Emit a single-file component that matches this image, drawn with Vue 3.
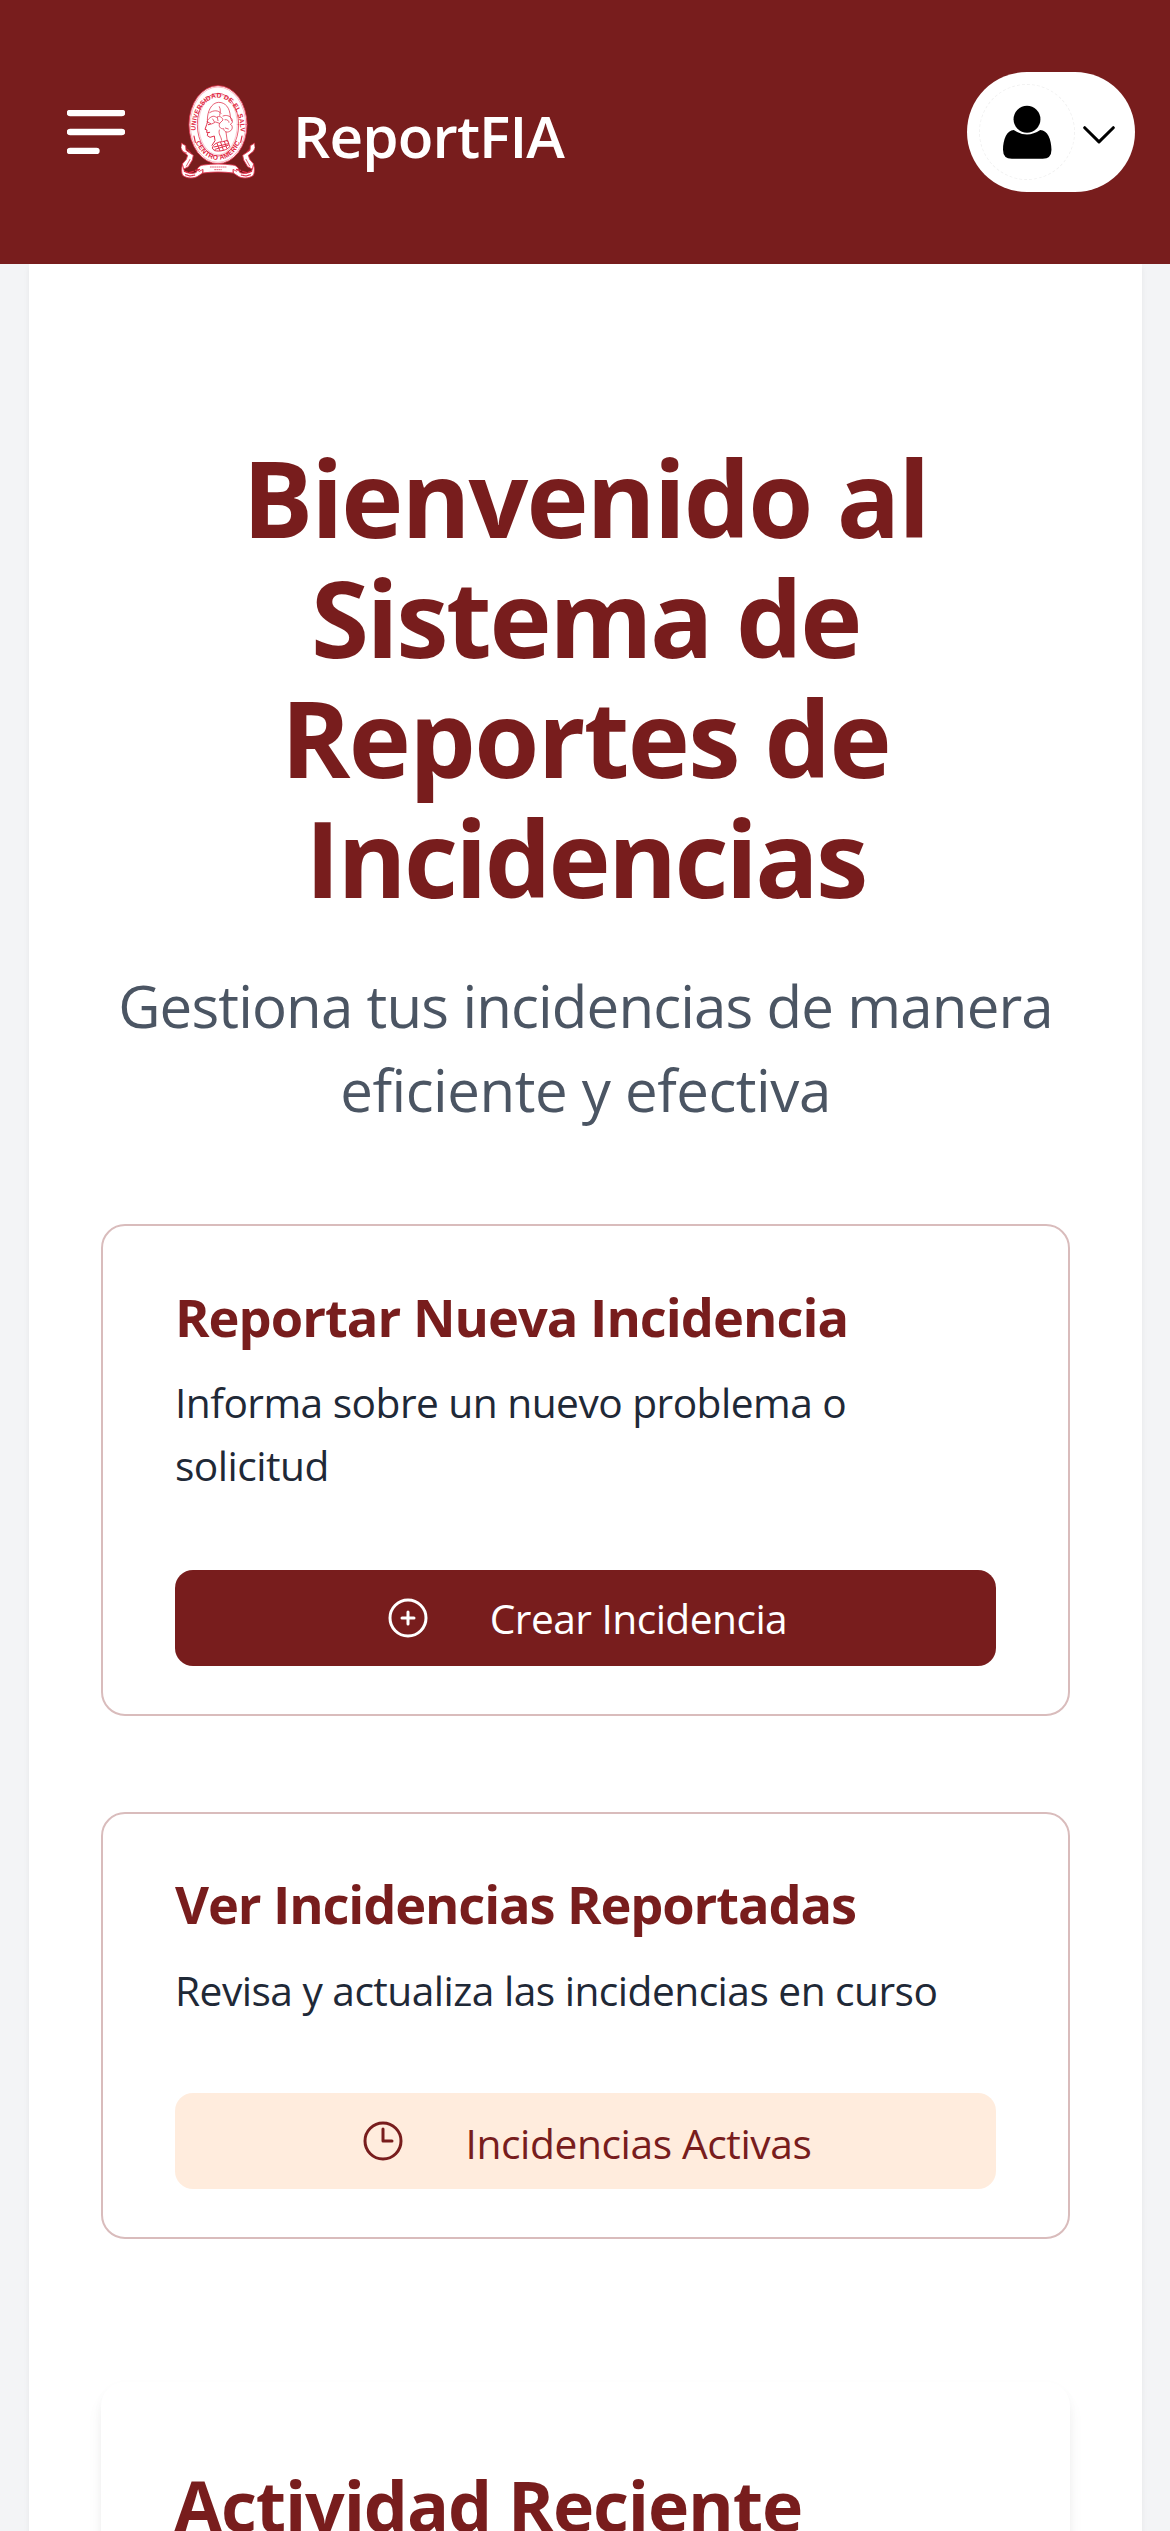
<script setup>
const titleLines = [
  { text: 'Bienvenido al', tone: 'l1' },
  { text: 'Sistema de', tone: 'l2' },
  { text: 'Reportes de', tone: 'l3' },
  { text: 'Incidencias', tone: 'l4' },
]
</script>

<template>
  <div class="screen">
    <header class="topbar">
      <div class="brand">
        <svg class="menu" viewBox="0 0 58 44" width="58" height="44" aria-label="Menú">
          <path d="M3 3H55M3 22H55M3 41H29.500" fill="none" stroke="#fff" stroke-width="6.400" stroke-linecap="round" />
        </svg>
        <svg class="crest" viewBox="10 15 222 282" width="74" height="94">
          <defs>
            <path id="arc-top" d="M53.500 152 A67.500 99 0 1 1 188.500 152" />
            <path id="arc-bottom" d="M52 182 A79 112 0 0 0 190 182" />
          </defs>
          <g stroke="#e33650" stroke-width="2.600" fill="#fff" stroke-linejoin="round" stroke-linecap="round">
            <path d="M12 190l12 7 1 14 22 15-3 14-12 20-15 8-3-16 12-14 4-12-15-12-5-10z" />
            <path d="M230 190l-12 7-1 14-22 15 3 14 12 20 15 8 3-16-12-14-4-12 15-12 5-10z" />
            <path d="M14 254c-3 12-3 24 1 32 12 10 34 10 45 3l15-10 2-16-15 2-6 12c-10 6-28 4-36-4z" />
            <path d="M228 254c3 12 3 24-1 32-12 10-34 10-45 3l-15-10-2-16 15 2 6 12c10 6 28 4 36-4z" />
            <path d="M60 265c4-6 10-10 18-10 28-4 58-4 86 0 8 0 14 4 18 10l-5 9-11-6v11c-28-4-62-4-90 0v-11l-11 6z" />
            <ellipse cx="121" cy="134" rx="87" ry="117" />
            <ellipse cx="121" cy="134" rx="83" ry="113" stroke-width="1" />
            <ellipse cx="121" cy="134" rx="62" ry="94" stroke-width="2.400" />
            <ellipse cx="121" cy="134" rx="58" ry="90" stroke-width=".8" />
          </g>
          <g class="motto" fill="#df2440">
            <text><textPath href="#arc-top" textLength="326" lengthAdjust="spacing">UNIVERSIDAD DE EL SALVADOR</textPath></text>
            <text><textPath href="#arc-bottom" startOffset="5" textLength="195" lengthAdjust="spacing">CENTRO AMERICA</textPath></text>
          </g>
          <g fill="none" stroke="#e0304a" stroke-width="2.300" stroke-linecap="round" stroke-linejoin="round">
            <path d="M49 168l4 19M193 168l-4 19" stroke-width="3.600" />
            <path d="M89 120c0-26 12-52 34-53 20 0 34 16 35 44l4 12M96 98c12-8 26-8 34 2M125 80c5 9 3 16 1 26" />
            <path d="M90 124l-3 10-5 14 6 2-1 7 3 3-1 7 8 5 13-4 2 14-9 14M92 134l7-2M89 158l7-1" stroke-width="3" />
            <path d="M91 119c8-9 16-14 25-7 10-6 18 0 20 8l-10 10-12-4-12 6-13-6zM105 117l5 8M119 112l2 10" />
            <path d="M136 108c10-4 20-1 26 8 5 8 2 14-4 17 9 4 7 17-2 21-9 5-17 1-18-8-10 2-17-8-12-16M142 119c7-1 12 3 12 8M143 144l9 3M125 150c-4 12 5 18 7 31M145 156l4 29" />
            <path d="M104 203c3-11 17-18 31-18l15-4 6 19c-7 10-29 16-45 12zM109 201l44-10M112 208l39-12M118 190l8 21M129 187l8 23M140 184l7 20" stroke-width="3" />
            <path d="M18 216l9 3M29 207l10 11M26 258l11-20M216 207l-10 11M216 258l-11-20" />
            <path d="M98 261h47M111 269h20" stroke-dasharray="3 3.500" />
            <path d="M20 274l10 3m5 1 12-4m6-3 14-3M24 284l13 4 15-3M222 274l-10 3m-5 1-12-4m-6-3-14-3M218 284l-13 4-15-3" stroke-dasharray="3 2" stroke-width="3.500" />
          </g>
        </svg>
        <span class="name">ReportFIA</span>
      </div>
      <div class="account">
        <span class="avatar">
          <svg viewBox="0 0 96 96" width="94" height="94">
            <circle cx="48" cy="35" r="13.700" />
            <path d="M34.500 46Q48 55 61.500 46C69 46 73 56 73 66Q73 75.200 64 75.200H32.500Q23.500 75.200 23.500 66C23.500 56 27.500 46 34.500 46Z" />
          </svg>
        </span>
        <svg class="chevron" viewBox="0 0 32 18" width="32" height="18">
          <path d="M1.700 1.700L16 15.900L30.300 1.700" fill="none" stroke="#000" stroke-width="3" stroke-linecap="round" stroke-linejoin="round" />
        </svg>
      </div>
    </header>

    <main class="panel">
      <h1><span v-for="line in titleLines" :key="line.text" :class="line.tone">{{ line.text }}</span></h1>
      <p class="lead"><span>Gestiona tus incidencias de manera</span><span class="second">eficiente y efectiva</span></p>

      <section class="card">
        <h2>Reportar Nueva Incidencia</h2>
        <p>Informa sobre un nuevo problema o<br>solicitud</p>
        <button class="primary">
          <svg viewBox="0 0 24 24" width="48" height="48"><path d="M12 9v6m3-3H9m12 0a9 9 0 1 1-18 0 9 9 0 0 1 18 0Z" /></svg>
          <span>Crear Incidencia</span>
        </button>
      </section>

      <section class="card reported">
        <h2>Ver Incidencias Reportadas</h2>
        <p>Revisa y actualiza las incidencias en curso</p>
        <button class="soft">
          <svg viewBox="0 0 24 24" width="48" height="48"><path d="M12 6v6h4.500m4.500 0a9 9 0 1 1-18 0 9 9 0 0 1 18 0Z" /></svg>
          <span>Incidencias Activas</span>
        </button>
      </section>

      <section class="activity">
        <h2>Actividad Reciente</h2>
      </section>
    </main>
  </div>
</template>

<style>
body { margin: 0; background: #f3f4f6; }
</style>

<style scoped>
* { box-sizing: border-box; }
.screen {
  width: 1170px;
  height: 2531px;
  overflow: hidden;
  background: #f3f4f6;
  font-family: "Open Sans", "Noto Sans", sans-serif;
}
h1, h2, p { margin: 0; white-space: nowrap; }
.topbar {
  display: flex;
  align-items: center;
  justify-content: space-between;
  height: 264px;
  padding: 0 35px 0 67px;
  background: #781d1d;
}
.brand { display: flex; align-items: center; }
.crest { margin-left: 56px; }
.motto { font: 700 20px "Liberation Sans", sans-serif; }
.name {
  margin: 7px 0 0 38px;
  color: #fff;
  font-size: 58.4px;
  font-weight: 620;
  line-height: 84px;
  letter-spacing: -0.85px;
}
.account {
  display: flex;
  align-items: center;
  width: 168px;
  height: 120px;
  padding-left: 12px;
  border-radius: 60px;
  background: #fff;
}
.avatar {
  display: flex;
  width: 96px;
  height: 96px;
  border: 1px dashed #f1f1f1;
  border-radius: 50%;
}
.chevron { margin: 5px 0 0 8px; }
.panel {
  width: 1113px;
  height: 2600px;
  margin-left: 29px;
  padding: 174px 72px 0;
  background: #fff;
  box-shadow: 0 3px 6px rgba(0, 0, 0, 0.06);
}
h1 {
  color: #781d1d;
  font-size: 105.2px;
  font-weight: 700;
  line-height: 120px;
  text-align: center;
}
h1 span, .lead span { display: block; }
.l1 { letter-spacing: -2px; }
.l2 { letter-spacing: -2.4px; }
.l3 { letter-spacing: -1.65px; }
.l4 { letter-spacing: -2.7px; }
.lead {
  margin-top: 46px;
  color: #4b5563;
  font-size: 58.2px;
  line-height: 84px;
  letter-spacing: -0.87px;
  text-align: center;
}
.lead .second { letter-spacing: -0.49px; }
.card {
  height: 492px;
  margin-top: 92px;
  padding: 49px 72px 0 72px;
  border: 2px solid #d9bcbc;
  border-radius: 24px;
}
.card h2 {
  color: #781d1d;
  font-size: 52.4px;
  line-height: 84px;
  letter-spacing: -0.98px;
}
.card p {
  margin-top: 12px;
  color: #1f2937;
  font-size: 40.7px;
  line-height: 63px;
  letter-spacing: -0.53px;
}
button {
  display: flex;
  align-items: center;
  justify-content: center;
  gap: 58px;
  width: 821px;
  height: 96px;
  margin-top: 73px;
  padding: 0;
  border: 0;
  border-radius: 18px;
  font: 400 40.7px/63px "Open Sans", "Noto Sans", sans-serif;
  letter-spacing: -0.54px;
}
button svg { fill: none; stroke: currentColor; stroke-width: 1.5; stroke-linecap: round; stroke-linejoin: round; }
.primary { background: #781d1d; color: #fff; }
.soft { background: #ffecdd; color: #781d1d; letter-spacing: -0.39px; }
.soft span { padding-top: 4px; }
.card.reported { height: 427px; margin-top: 96px; padding-top: 48px; }
.reported h2 { letter-spacing: -1.12px; }
.reported p { margin-top: 13px; }
.reported button { margin-top: 71px; }
.activity {
  height: 400px;
  margin-top: 143px;
  padding: 75px 73px 0;
  border-radius: 24px;
  background: #fff;
  box-shadow: 0 12px 18px -3px rgba(0, 0, 0, 0.08), 0 3px 12px -2px rgba(0, 0, 0, 0.04);
}
.activity h2 {
  color: #781d1d;
  font-size: 69.8px;
  line-height: 96px;
  letter-spacing: -1.13px;
}
</style>
